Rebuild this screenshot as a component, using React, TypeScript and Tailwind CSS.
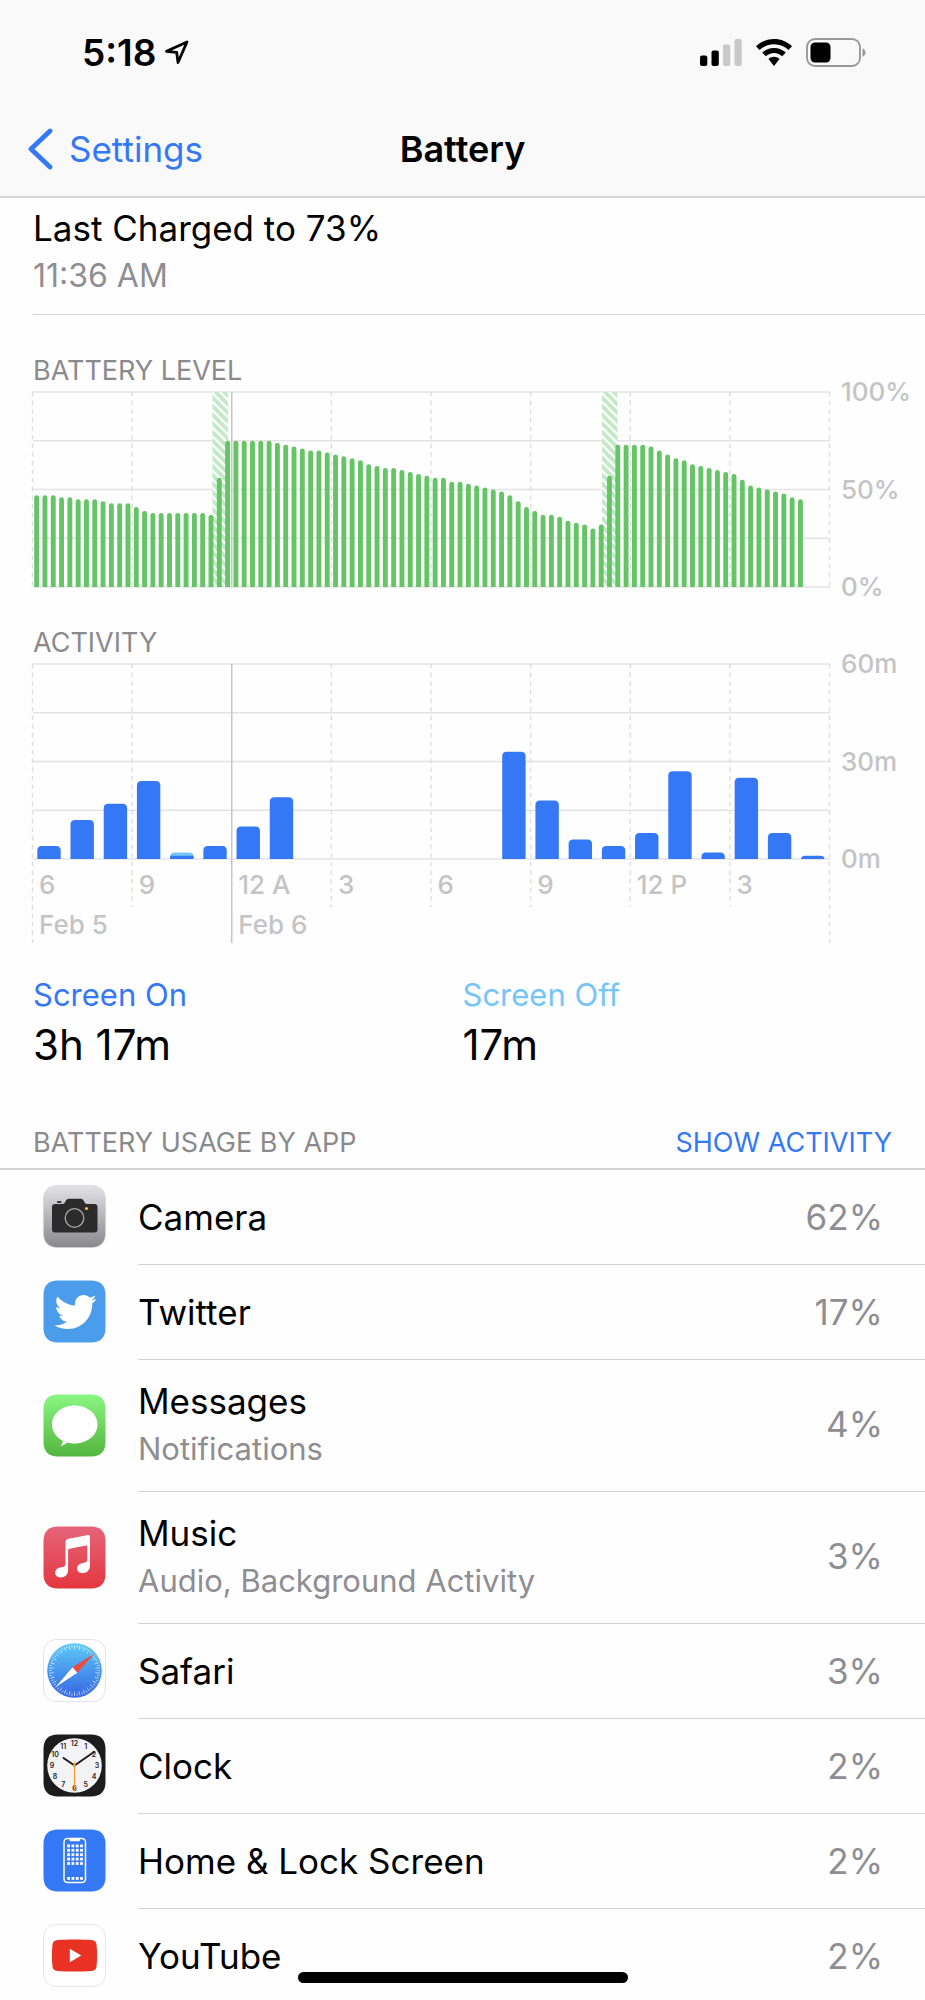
import React from "react";
import { FaTwitter } from "react-icons/fa";

const batteryLevels = [
  47, 47, 47, 46, 46, 45, 45, 45, 44, 43, 43, 43, 41, 39, 38, 38, 38, 38, 38, 38, 38, 37, 56, 75,
  75, 75, 75, 75, 75, 74, 73, 72, 71, 70, 70, 69, 68, 67, 66, 65, 63, 62, 61, 61, 60, 59, 58, 57,
  56, 56, 54, 54, 53, 52, 51, 50, 49, 47, 44, 41, 39, 37, 37, 36, 34, 33, 32, 30, 32, 57, 73, 73,
  73, 73, 72, 70, 68, 66, 65, 63, 62, 61, 60, 59, 58, 55, 52, 51, 50, 49, 48, 46, 45,
];

const activity: { on: number; off?: number }[] = [
  { on: 4 }, { on: 12 }, { on: 17 }, { on: 24 }, { on: 1, off: 1 }, { on: 4 },
  { on: 10 }, { on: 19 }, { on: 0 }, { on: 0 }, { on: 0 }, { on: 0 },
  { on: 0 }, { on: 0 }, { on: 33 }, { on: 18 }, { on: 6 }, { on: 4 },
  { on: 8 }, { on: 27 }, { on: 2 }, { on: 25 }, { on: 8 }, { on: 1 },
];

const hours = ["6", "9", "12 A", "3", "6", "9", "12 P", "3"];

const PLOT_W = 797;
const PLOT_H = 195;
const COL = PLOT_W / 8;

function HorizontalLines() {
  return (
    <g stroke="#e3e3e4" strokeWidth="1.6">
      {[0, 1, 2, 3, 4].map((i) => (
        <line key={i} x1="0" x2={PLOT_W} y1={(i * PLOT_H) / 4} y2={(i * PLOT_H) / 4} />
      ))}
    </g>
  );
}

function VerticalLines({ bottom, dayBottom }: { bottom: number; dayBottom: number }) {
  return (
    <g strokeWidth="1.4">
      {Array.from({ length: 9 }, (_, i) => (
        <line
          key={i}
          x1={i * COL - 0.5}
          x2={i * COL - 0.5}
          y1="0"
          y2={i === 0 || i === 2 || i === 8 ? dayBottom : bottom}
          stroke={i === 2 ? "#c4c4c6" : "#dedee0"}
          strokeDasharray={i === 2 ? undefined : "4.6 4"}
        />
      ))}
    </g>
  );
}

function AxisLabels({ labels }: { labels: string[] }) {
  return (
    <g fill="#c4c4c6" fontSize="26" fontWeight="500">
      {labels.map((label, i) => (
        <text key={label} x="808" y={9.4 + (i * PLOT_H) / 2}>
          {label}
        </text>
      ))}
    </g>
  );
}

function ChargingBand({ id, x }: { id: string; x: number }) {
  const width = 15.5;
  return (
    <g>
      <clipPath id={id}>
        <rect x={x} y="0" width={width} height={PLOT_H} />
      </clipPath>
      <rect x={x} y="0" width={width} height={PLOT_H} fill="#c2eac7" />
      <g clipPath={`url(#${id})`} stroke="#fff" strokeWidth="2.2">
        {Array.from({ length: 26 }, (_, i) => {
          const y = i * 8.6 - 16;
          return <line key={i} x1={x - 4} y1={y - 4} x2={x + width + 4} y2={y + width + 4} />;
        })}
      </g>
    </g>
  );
}

function BatteryLevelChart() {
  const step = COL / 12;
  return (
    <svg viewBox="0 0 892 198" className="block w-full overflow-visible" role="img" aria-label="Battery level">
      <HorizontalLines />
      <VerticalLines bottom={PLOT_H} dayBottom={PLOT_H} />
      <ChargingBand id="charge-night" x={179.5} />
      <ChargingBand id="charge-noon" x={569} />
      <g fill="#65c466">
        {batteryLevels.map((level, i) => {
          const x = i * step + 1.2;
          const h = (level / 100) * PLOT_H;
          return (
            <path
              key={i}
              d={`M${x} ${PLOT_H}V${PLOT_H - h + 2.4}a2.45 2.4 0 0 1 4.9 0V${PLOT_H}Z`}
            />
          );
        })}
      </g>
      <AxisLabels labels={["100%", "50%", "0%"]} />
    </svg>
  );
}

function ActivityChart() {
  const step = PLOT_W / 24;
  return (
    <svg viewBox="0 0 892 280" className="block w-full overflow-visible" role="img" aria-label="Activity">
      <HorizontalLines />
      <VerticalLines bottom={243} dayBottom={279} />
      {activity.map(({ on, off = 0 }, i) => {
        const total = on + off;
        if (!total) return null;
        const x = i * step + 4.3;
        const top = PLOT_H - (total / 60) * PLOT_H;
        const r = Math.min(4.5, PLOT_H - top);
        const onTop = PLOT_H - (on / 60) * PLOT_H;
        return (
          <g key={i}>
            <path
              d={`M${x} ${PLOT_H}V${top + r}q0 ${-r} 4.5 ${-r}h14.4q4.5 0 4.5 ${r}V${PLOT_H}Z`}
              fill={off ? "#76c5f4" : "#3478f6"}
            />
            {off > 0 && <rect x={x} y={onTop} width="23.4" height={PLOT_H - onTop} fill="#3478f6" />}
          </g>
        );
      })}
      <AxisLabels labels={["60m", "30m", "0m"]} />
      <g fill="#c4c4c6" fontSize="26" fontWeight="500">
        {hours.map((hour, i) => (
          <text key={i} x={i * COL + 6} y="230">
            {hour}
          </text>
        ))}
        <text x="6" y="270">Feb 5</text>
        <text x={2 * COL + 6} y="270">Feb 6</text>
      </g>
    </svg>
  );
}

function IconTile({ children }: { children: React.ReactNode }) {
  return (
    <svg viewBox="0 0 63 63" className="mb-0.5 size-[63px] shrink-0" aria-hidden="true">
      {children}
    </svg>
  );
}

const TILE = "M15 .5H48C57.5 .5 62.5 5.5 62.5 15V48C62.5 57.5 57.5 62.5 48 62.5H15C5.5 62.5 .5 57.5 .5 48V15C.5 5.5 5.5 .5 15 .5Z";

function CameraIcon() {
  return (
    <IconTile>
      <linearGradient id="cam" x2="0" y2="1">
        <stop stopColor="#e3e2e8" />
        <stop offset="1" stopColor="#89888d" />
      </linearGradient>
      <path d={TILE} fill="url(#cam)" stroke="#cfcfd2" strokeWidth=".6" />
      <path d="M14 18v-1.3q0-.7.7-.7h3.1q.7 0 .7.7V18Z" fill="#3a3a3c" />
      <path d="M9 22q0-3 3-3h7.5c1.6 0 2.2-.8 2.9-2.4.9-2 1.6-2.9 3.6-2.9h11.5c2 0 2.7.9 3.6 2.9.7 1.6 1.3 2.4 2.9 2.4H51.5q3 0 3 3V44.5q0 3-3 3H12q-3 0-3-3Z" fill="#2b2b2b" />
      <circle cx="31.5" cy="33" r="9.3" fill="none" stroke="#a9a9ac" strokeWidth="1.3" />
      <circle cx="43.5" cy="23.5" r="1.6" fill="#f5c52f" />
    </IconTile>
  );
}

function TwitterIcon() {
  return (
    <IconTile>
      <path d={TILE} fill="#4b9deb" />
      <FaTwitter x="11.5" y="11" width="42" height="42" size={42} color="#fff" />
    </IconTile>
  );
}

function MessagesIcon() {
  return (
    <IconTile>
      <linearGradient id="msg" x2="0" y2="1">
        <stop stopColor="#8af683" />
        <stop offset="1" stopColor="#53b53d" />
      </linearGradient>
      <path d={TILE} fill="url(#msg)" />
      <path d="M31.5 11.5C44.2 11.5 54.5 19.8 54.5 30.5S44.2 49.5 31.5 49.5c-2.6 0-5.1-.3-7.4-.9-1.7 1.8-4.2 3.2-7 3.6 1.6-1.5 2.6-3.3 2.7-5.4C13.3 43.5 9 37.5 9 30.5 9 19.8 18.8 11.5 31.5 11.5Z" fill="#fff" />
    </IconTile>
  );
}

function MusicIcon() {
  return (
    <IconTile>
      <linearGradient id="mus" x2="0" y2="1">
        <stop stopColor="#e5647a" />
        <stop offset="1" stopColor="#e5373f" />
      </linearGradient>
      <path d={TILE} fill="url(#mus)" />
      <path d="M22.5 15.8q0-2.2 2.1-2.7L45 9.1q1.900-.3 1.900 1.5V39.5c0 4.5-2.5 7.2-6.9 7.6-3.4.2-5.9-1.6-5.9-4.6 0-3.1 2.2-4.7 5.9-5.5 3-.6 4.3-1.1 4.3-3.3V20.6q0-1.4-1.4-1.1L26.500 22.700q-1.4.3-1.4 1.7V43.5c0 4.7-2.6 7.7-7 8-3.4.2-5.9-1.8-5.9-4.7 0-3.1 2.3-4.8 6-5.5 3-.6 4.3-1.2 4.3-3.4Z" fill="#fff" />
    </IconTile>
  );
}

function SafariIcon() {
  return (
    <IconTile>
      <linearGradient id="saf" x2="0" y2="1">
        <stop stopColor="#5ccbf7" />
        <stop offset="1" stopColor="#3564e4" />
      </linearGradient>
      <path d={TILE} fill="#fff" stroke="#e3e3e5" />
      <circle cx="31.5" cy="31.5" r="27.3" fill="url(#saf)" />
      <g stroke="#fff" strokeWidth=".7" opacity=".85">
        {Array.from({ length: 60 }, (_, i) => (
          <line key={i} x1="31.5" x2="31.5" y1="6" y2={i % 2 ? 8.5 : 10.5} transform={`rotate(${i * 6} 31.5 31.5)`} />
        ))}
      </g>
      <path d="M51.5 14.5L29.5 28.3 34.3 33.8Z" fill="#eb4d3d" />
      <path d="M12.5 48.3L29.5 28.3 34.3 33.8Z" fill="#fff" />
    </IconTile>
  );
}

function ClockIcon() {
  return (
    <IconTile>
      <path d={TILE} fill="#1c1c1c" />
      <circle cx="31.5" cy="31.5" r="27.3" fill="#f3f3f6" />
      <g fill="#1c1c1c" fontSize="7" fontWeight="600" textAnchor="middle">
        {Array.from({ length: 12 }, (_, i) => {
          const a = ((i + 1) * Math.PI) / 6;
          return (
            <text key={i} x={31.5 + 22.5 * Math.sin(a)} y={34 - 22.5 * Math.cos(a)}>
              {i + 1}
            </text>
          );
        })}
      </g>
      <path d="M31.5 31.5L20.5 24M31.5 31.5L51 18" stroke="#1c1c1c" strokeWidth="2" strokeLinecap="round" />
      <path d="M31.5 28V57" stroke="#f09a37" strokeWidth="1.2" />
      <circle cx="31.5" cy="31.5" r="1.6" fill="#f09a37" />
    </IconTile>
  );
}

function HomeScreenIcon() {
  return (
    <IconTile>
      <path d={TILE} fill="#3478f6" />
      <rect x="21" y="9.5" width="21.5" height="44" rx="3.5" fill="none" stroke="#fff" strokeWidth="1.5" />
      <path d="M26.5 9.5h10.5v1.5q0 1.2-1.2 1.2h-8.1q-1.2 0-1.2-1.2Z" fill="#fff" />
      <g fill="#fff">
        {[15.5, 19.9, 24.3, 28.7, 33.1, 48].map((y) =>
          [24.2, 28.5, 32.8, 37.1].map((x) => <rect key={`${x}-${y}`} x={x} y={y} width="2.8" height="2.8" />),
        )}
      </g>
    </IconTile>
  );
}

function YouTubeIcon() {
  return (
    <IconTile>
      <path d={TILE} fill="#fff" stroke="#e6e6e8" />
      <path d="M9.5 20.5C10 17.5 11.5 16.3 14.5 16 25 15.3 38 15.3 48.5 16 51.5 16.3 53 17.5 53.5 20.5 54.3 27.5 54.3 35.5 53.5 42.5 53 45.5 51.5 46.7 48.5 47 38 47.7 25 47.7 14.5 47 11.5 46.7 10 45.5 9.5 42.5 8.7 35.5 8.7 27.5 9.5 20.5Z" fill="#e93223" />
      <path d="M26.8 24.8L38.3 31.5 26.8 38.2Z" fill="#fff" />
    </IconTile>
  );
}

const apps = [
  { name: "Camera", usage: "62%", Icon: CameraIcon },
  { name: "Twitter", usage: "17%", Icon: TwitterIcon },
  { name: "Messages", detail: "Notifications", usage: "4%", Icon: MessagesIcon },
  { name: "Music", detail: "Audio, Background Activity", usage: "3%", Icon: MusicIcon },
  { name: "Safari", usage: "3%", Icon: SafariIcon },
  { name: "Clock", usage: "2%", Icon: ClockIcon },
  { name: "Home & Lock Screen", usage: "2%", Icon: HomeScreenIcon },
  { name: "YouTube", usage: "2%", Icon: YouTubeIcon },
];

function StatusBar() {
  return (
    <div className="flex h-[105px] items-center justify-between pl-[82px] pr-[59px]">
      <div className="flex items-center gap-2">
        <span className="text-[37px] font-semibold leading-10">5:18</span>
        <svg width="25" height="25" viewBox="0 0 25 25" fill="none" stroke="#000" strokeWidth="2.8" strokeLinejoin="round" aria-label="Location in use">
          <path d="M23 2L2.5 11.3 12.7 12.3 14 22.5Z" />
        </svg>
      </div>
      <div className="flex items-center gap-[14px]">
        <svg width="42" height="27" viewBox="0 0 42 27" aria-label="Cellular signal">
          <rect x="0" y="16.5" width="7.3" height="10.5" rx="2" />
          <rect x="11.5" y="11.5" width="7.3" height="15.5" rx="2" />
          <rect x="23" y="5.5" width="7.3" height="21.5" rx="2" fill="#c8c8c9" />
          <rect x="34.5" y="0" width="7.3" height="27" rx="2" fill="#c8c8c9" />
        </svg>
        <svg width="36" height="27" viewBox="0 0 36 27" aria-label="Wi-Fi">
          <path d="M18 0C25 0 31.3 2.7 36 7.2L32.5 10.9C28.7 7.4 23.6 5.2 18 5.2S7.3 7.4 3.5 10.9L0 7.2C4.7 2.7 11 0 18 0Z" />
          <path d="M18 9C22.6 9 26.7 10.7 29.8 13.6L26.2 17.3C24 15.3 21.2 14 18 14S12 15.3 9.8 17.3L6.2 13.6C9.3 10.7 13.4 9 18 9Z" />
          <path d="M18 17.8C20.1 17.8 22 18.6 23.5 19.9L18 27 12.5 19.9C14 18.6 15.9 17.8 18 17.8Z" />
        </svg>
        <svg width="60" height="29" viewBox="0 0 60 29" aria-label="Battery">
          <rect x="1" y="1" width="53" height="27" rx="8" fill="none" stroke="#99999a" strokeWidth="1.9" />
          <rect x="4.5" y="4.5" width="20" height="20" rx="4.5" />
          <path d="M56.5 10.2C58.3 11 59.5 12.5 59.5 14.5S58.3 18 56.5 18.8Z" fill="#99999a" />
        </svg>
      </div>
    </div>
  );
}

export default function App() {
  return (
    <div className="relative flex h-dvh flex-col overflow-hidden bg-[#fefefe] font-['Inter',sans-serif] text-black">
      <header className="shrink-0 border-b-2 border-[#d6d6d7] bg-[#f9f9fa]">
        <StatusBar />
        <nav className="grid h-[91px] grid-cols-3 items-center px-7 pb-1">
          <a href="#settings" className="flex items-center gap-4 text-[35px] leading-[44px] text-[#3478f6]">
            <svg width="25" height="42" viewBox="0 0 25 42" fill="none" stroke="currentColor" strokeWidth="4.8" strokeLinecap="round" strokeLinejoin="round" aria-hidden="true">
              <path d="M22 3L3 21 22 39" />
            </svg>
            Settings
          </a>
          <h1 className="text-center text-[36px] font-semibold leading-[44px]">Battery</h1>
        </nav>
      </header>

      <main className="min-h-0 flex-1 overflow-y-auto [scrollbar-width:none]">
        <section className="ml-[33px] border-b border-[#d3d3d5] pb-[15px] pt-[7px]">
          <h2 className="mb-0.5 text-[35px] leading-[46px]">Last Charged to 73%</h2>
          <p className="text-[32px] leading-[46px] text-[#8e8e92]">11:36 AM</p>
        </section>

        <section className="pl-[33px] pt-[38px]">
          <h3 className="mb-[3px] text-[27px] leading-9 text-[#8a8a8d]">BATTERY LEVEL</h3>
          <BatteryLevelChart />
        </section>

        <section className="pl-[33px] pt-[35px]">
          <h3 className="mb-[3px] text-[27px] leading-9 text-[#8a8a8d]">ACTIVITY</h3>
          <ActivityChart />
        </section>

        <dl className="grid grid-cols-2 px-[33px] pt-[29px]">
          <div>
            <dt className="text-[31px] leading-[44px] text-[#3478f6]">Screen On</dt>
            <dd className="text-[42px] leading-[56px]">3h 17m</dd>
          </div>
          <div>
            <dt className="text-[31px] leading-[44px] text-[#76c5f7]">Screen Off</dt>
            <dd className="text-[42px] leading-[56px]">17m</dd>
          </div>
        </dl>

        <div className="flex items-center justify-between border-b-2 border-[#d3d3d5] px-[33px] pb-[7px] pt-[52px] text-[27px] leading-9">
          <h3 className="text-[#8a8a8d]">BATTERY USAGE BY APP</h3>
          <button type="button" className="text-[#3478f6]">SHOW ACTIVITY</button>
        </div>

        <ul>
          {apps.map(({ name, detail, usage, Icon }) => (
            <li key={name} className="flex items-center pl-[43px]">
              <Icon />
              <div className={`ml-8 flex flex-1 items-center justify-between border-b border-[#d3d3d5] pr-[42px] ${detail ? "h-[132px] pb-0.5" : "h-[95px]"}`}>
                <div>
                  <p className="text-[35px] leading-[47px]">{name}</p>
                  {detail && <p className="text-[31px] leading-[47px] text-[#8e8e92]">{detail}</p>}
                </div>
                <span className="text-[35px] leading-[47px] text-[#8e8e92]">{usage}</span>
              </div>
            </li>
          ))}
        </ul>
      </main>

      <div className="absolute bottom-[17px] left-1/2 h-[11px] w-[330px] -translate-x-1/2 rounded-full bg-black" />
    </div>
  );
}
